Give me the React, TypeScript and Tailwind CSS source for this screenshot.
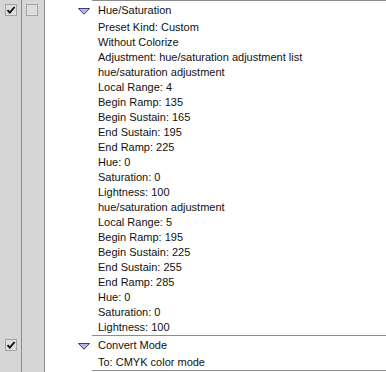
import React from "react";

type Group = {
  title: string;
  lines: string[];
  checked: boolean;
  last?: boolean;
};

const groups: Group[] = [
  {
    title: "Hue/Saturation",
    checked: true,
    lines: [
      "Preset Kind: Custom",
      "Without Colorize",
      "Adjustment: hue/saturation adjustment list",
      "hue/saturation adjustment",
      "Local Range: 4",
      "Begin Ramp: 135",
      "Begin Sustain: 165",
      "End Sustain: 195",
      "End Ramp: 225",
      "Hue: 0",
      "Saturation: 0",
      "Lightness: 100",
      "hue/saturation adjustment",
      "Local Range: 5",
      "Begin Ramp: 195",
      "Begin Sustain: 225",
      "End Sustain: 255",
      "End Ramp: 285",
      "Hue: 0",
      "Saturation: 0",
      "Lightness: 100",
    ],
  },
  {
    title: "Convert Mode",
    checked: true,
    last: true,
    lines: ["To: CMYK color mode"],
  },
];

function CheckBox({ checked }: { checked: boolean }) {
  return (
    <div className="flex h-[12px] w-[12px] items-center justify-center border border-[#a3a3a3] bg-[#dedede]">
      {checked && (
        <svg width="10" height="10" viewBox="0 0 10 10">
          <path d="M1.5 5.2 L3.8 7.6 L8.6 2" fill="none" stroke="#111" strokeWidth="1.9" />
        </svg>
      )}
    </div>
  );
}

function Triangle() {
  return (
    <svg width="12" height="7" viewBox="0 0 12 7">
      <path d="M0.5 0.5 H11.5 L6 6.3 Z" fill="#b4b4f0" stroke="#3c3c78" strokeWidth="1" />
    </svg>
  );
}

function GroupRow({ group }: { group: Group }) {
  return (
    <div className="flex">
      {/* visibility column */}
      <div className="w-[22px] shrink-0 border-r border-[#8c8c8c] bg-[#d6d6d6] pl-[5px] pt-[4px]">
        {group.checked && <CheckBox checked />}
      </div>
      {/* dialog toggle column */}
      <div className="w-[23px] shrink-0 border-r border-[#8c8c8c] bg-[#d6d6d6] pl-[4px] pt-[4px]">
        {group.title === "Hue/Saturation" && <CheckBox checked={false} />}
      </div>
      <div className="flex flex-1 bg-white">
        <div className="flex w-[47px] shrink-0 justify-end pr-[2px] pt-[8px]">
          <Triangle />
        </div>
        <div
          className={`flex-1 border-t border-[#8c8c8c] ${group.last ? "border-b" : ""}`}
        >
          <div className="flex h-[19px] items-center pl-[6px] pb-[1px]">{group.title}</div>
          {group.lines.map((line, i) => (
            <div key={i} className="h-[15px] pl-[6px] leading-[15px]">
              {line}
            </div>
          ))}
        </div>
      </div>
    </div>
  );
}

export default function App() {
  return (
    <div
      className="flex h-[372px] w-[386px] flex-col overflow-hidden bg-[#d6d6d6] text-[11px] text-[#111]"
      style={{ fontFamily: '"Liberation Sans", Arial, sans-serif' }}
    >
      {groups.map((g) => (
        <GroupRow key={g.title} group={g} />
      ))}
      <div className="flex flex-1">
        <div className="w-[22px] border-r border-[#8c8c8c]" />
        <div className="w-[23px] border-r border-[#8c8c8c]" />
        <div className="flex-1 bg-white" />
      </div>
    </div>
  );
}
